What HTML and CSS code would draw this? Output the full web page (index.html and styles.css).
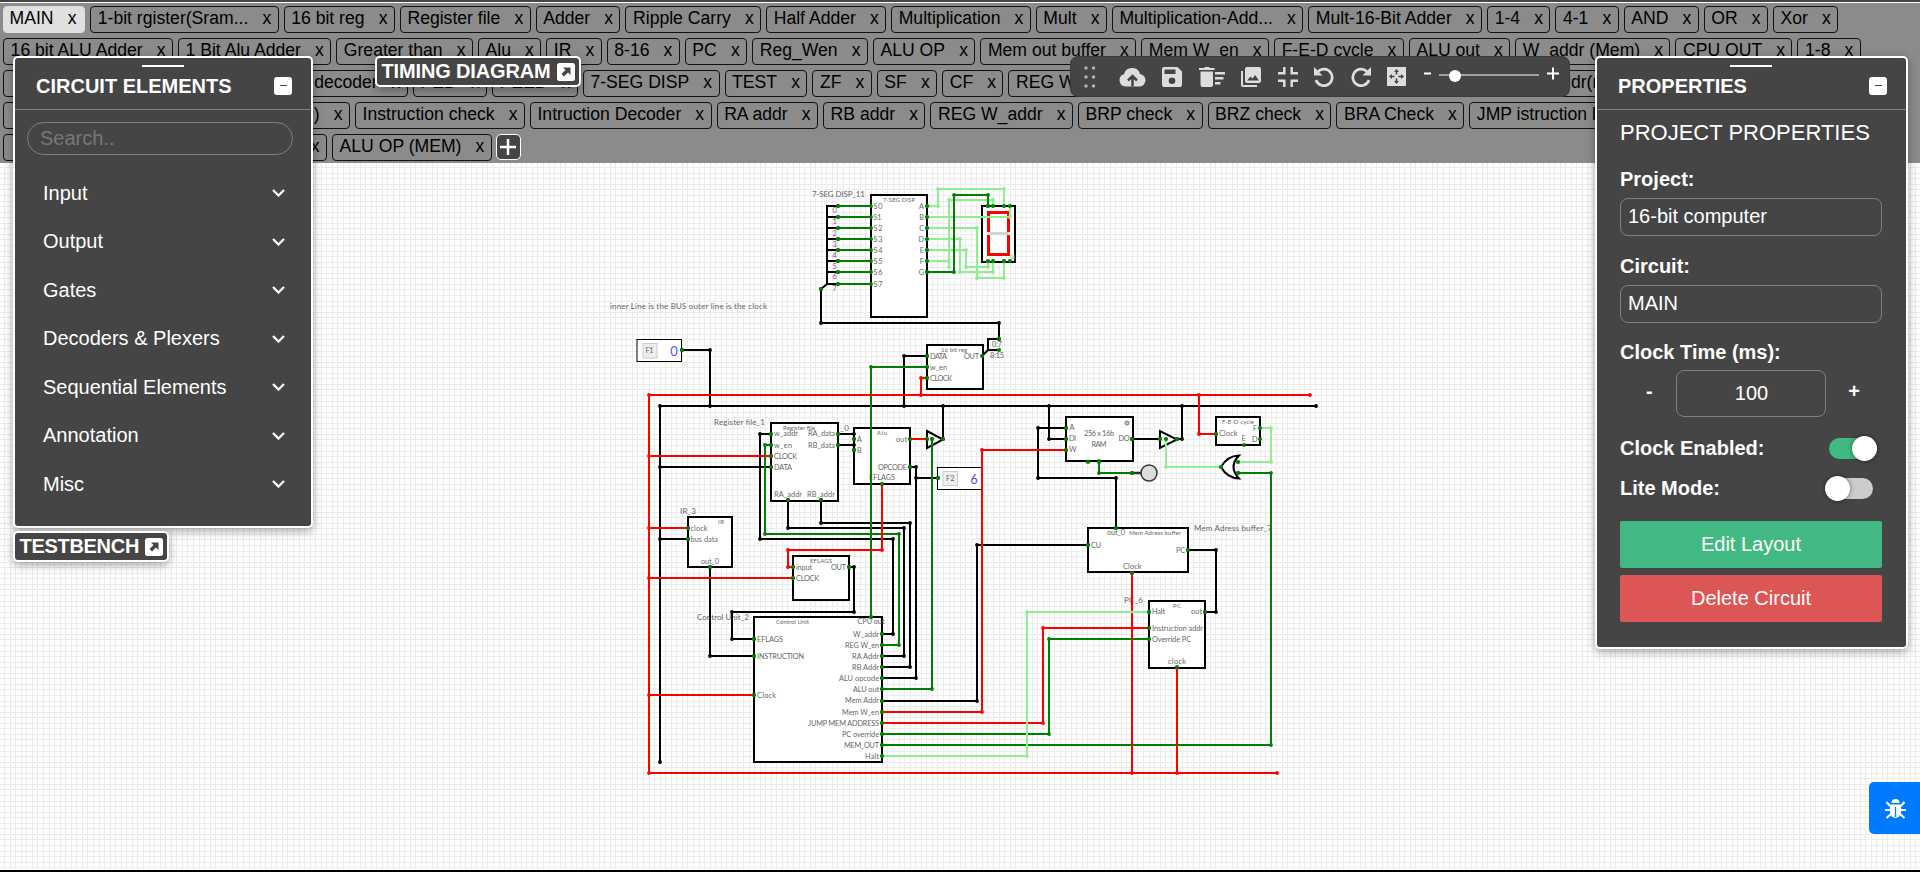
FILE: index.html
```html
<!DOCTYPE html>
<html lang="en">
<head>
<meta charset="utf-8">
<title>16-bit computer</title>
<link rel="stylesheet" href="styles.css">
</head>
<body>
<div class="app">
  <header class="tabs">
    <div class="row">
      <span class="tab active">MAIN<i>x</i></span><span class="tab">1-bit rgister(Sram...<i>x</i></span><span class="tab">16 bit reg<i>x</i></span><span class="tab">Register file<i>x</i></span><span class="tab">Adder<i>x</i></span><span class="tab">Ripple Carry<i>x</i></span><span class="tab">Half Adder<i>x</i></span><span class="tab">Multiplication<i>x</i></span><span class="tab">Mult<i>x</i></span><span class="tab">Multiplication-Add...<i>x</i></span><span class="tab">Mult-16-Bit Adder<i>x</i></span><span class="tab">1-4<i>x</i></span><span class="tab">4-1<i>x</i></span><span class="tab">AND<i>x</i></span><span class="tab">OR<i>x</i></span><span class="tab">Xor<i>x</i></span>
    </div>
    <div class="row">
      <span class="tab">16 bit ALU Adder<i>x</i></span><span class="tab">1 Bit Alu Adder<i>x</i></span><span class="tab">Greater than<i>x</i></span><span class="tab">Alu<i>x</i></span><span class="tab">IR<i>x</i></span><span class="tab">8-16<i>x</i></span><span class="tab">PC<i>x</i></span><span class="tab">Reg_Wen<i>x</i></span><span class="tab">ALU OP<i>x</i></span><span class="tab">Mem out buffer<i>x</i></span><span class="tab">Mem W_en<i>x</i></span><span class="tab">F-E-D cycle<i>x</i></span><span class="tab">ALU out<i>x</i></span><span class="tab">W_addr (Mem)<i>x</i></span><span class="tab">CPU OUT<i>x</i></span><span class="tab">1-8<i>x</i></span>
    </div>
    <div class="row">
      <span class="tab w-a"></span><span class="tab w-b">decoder<i>x</i></span><span class="tab">PED<i>x</i></span><span class="tab">PEED<i>x</i></span><span class="tab">7-SEG DISP<i>x</i></span><span class="tab">TEST<i>x</i></span><span class="tab">ZF<i>x</i></span><span class="tab">SF<i>x</i></span><span class="tab">CF<i>x</i></span><span class="tab w-c">REG W</span><span class="tab">W_addr(reg)<i>x</i></span>
    </div>
    <div class="row">
      <span class="tab w-d"></span><span class="tab w-e">(MEM)<i>x</i></span><span class="tab">Instruction check<i>x</i></span><span class="tab">Intruction Decoder<i>x</i></span><span class="tab">RA addr<i>x</i></span><span class="tab">RB addr<i>x</i></span><span class="tab">REG W_addr<i>x</i></span><span class="tab">BRP check<i>x</i></span><span class="tab">BRZ check<i>x</i></span><span class="tab">BRA Check<i>x</i></span><span class="tab">JMP istruction b...<i>x</i></span>
    </div>
    <div class="row">
      <span class="tab w-f"></span><span class="tab w-g"><i>x</i></span><span class="tab">ALU OP (MEM)<i>x</i></span><button class="add" aria-label="New circuit"><svg width="16" height="16"><path d="M8 0V16M0 8H16"/></svg></button>
    </div>
  </header>

  <main class="stage">
    <svg class="canvas" viewBox="0 163 1920 707" width="1920" height="707">
      <defs>
        <pattern id="grid" x="49" y="45" width="50" height="50" patternUnits="userSpaceOnUse">
          <path class="gridline" d="M0 .5H50M0 6.500H50M0 11.500H50M0 17.500H50M0 22.500H50M0 28.500H50M0 33.500H50M0 39.500H50M0 44.500H50M.5 0V50M5.500 0V50M11.500 0V50M16.500 0V50M22.500 0V50M27.500 0V50M33.500 0V50M38.500 0V50M44.500 0V50"/>
        </pattern>
        <marker id="mk" markerUnits="userSpaceOnUse" markerWidth="4" markerHeight="4" refX="2" refY="2"><circle cx="2" cy="2" r="1.900" fill="#000"/></marker>
        <marker id="mr" markerUnits="userSpaceOnUse" markerWidth="4" markerHeight="4" refX="2" refY="2"><circle cx="2" cy="2" r="1.900" fill="#f00"/></marker>
        <marker id="mg" markerUnits="userSpaceOnUse" markerWidth="4" markerHeight="4" refX="2" refY="2"><circle cx="2" cy="2" r="1.900" fill="#008000"/></marker>
        <marker id="ml" markerUnits="userSpaceOnUse" markerWidth="4" markerHeight="4" refX="2" refY="2"><circle cx="2" cy="2" r="1.900" fill="#90ee90"/></marker>
      </defs>
      <rect x="0" y="163" width="1920" height="707" fill="url(#grid)"/>

      <g class="lbl">
        <text class="n" x="812" y="196.500" textLength="53">7-SEG DISP_11</text>
        <text class="n" x="610" y="309" textLength="157">inner Line is the BUS outer line is the clock</text>
        <text class="n" x="714" y="425" textLength="51">Register file_1</text>
        <text class="n" x="840" y="431" textLength="9">_0</text>
        <text class="n" x="680" y="514" textLength="16">IR_3</text>
        <text class="n" x="697" y="620" textLength="52">Control Unit_2</text>
        <text class="n" x="1194" y="531" textLength="78">Mem Adress buffer_7</text>
        <text class="n" x="1124" y="603" textLength="19">PC_6</text>
      </g>

      <g class="box">
        <rect x="871" y="195" width="56" height="122"/>
        <rect x="982" y="206" width="33" height="56"/>
        <rect x="927" y="345" width="56" height="44"/>
        <rect x="771" y="423" width="67" height="78"/>
        <rect x="854" y="428" width="56" height="56"/>
        <rect x="793" y="556" width="56" height="44"/>
        <rect x="688" y="517" width="44" height="50"/>
        <rect x="754" y="617" width="128" height="145"/>
        <rect x="1066" y="417" width="67" height="44"/>
        <rect x="1216" y="417" width="44" height="28"/>
        <rect x="1088" y="528" width="100" height="44"/>
        <rect x="1149" y="601" width="56" height="67"/>
      </g>
      <g class="inp">
        <rect x="637" y="339.500" width="44.500" height="22"/><rect x="937.500" y="467.500" width="44.500" height="22"/>
      </g>
      <g class="key"><rect x="643" y="343.500" width="14" height="14.500"/><rect x="943" y="471.500" width="14.500" height="14"/></g>

      <g class="lbl">
        <text x="832.500" y="213">0</text><text x="832.500" y="224">1</text><text x="832.500" y="236">2</text><text x="832.500" y="247">3</text><text x="832.500" y="258">4</text><text x="832.500" y="269">5</text><text x="832.500" y="279">6</text><text x="832.500" y="291">7</text>
        <text x="873.500" y="209" textLength="9">S0</text><text x="873.500" y="220" textLength="8">S1</text><text x="873.500" y="231" textLength="9">S2</text><text x="873.500" y="242" textLength="9">S3</text><text x="873.500" y="253" textLength="9">S4</text><text x="873.500" y="264" textLength="9">S5</text><text x="873.500" y="275" textLength="9">S6</text><text x="873.500" y="287" textLength="9">S7</text>
        <g class="e"><text x="924" y="209">A</text><text x="924" y="220">B</text><text x="924" y="231">C</text><text x="924" y="242">D</text><text x="924" y="253">E</text><text x="924" y="264">F</text><text x="924" y="275">G</text></g>
        <text class="t" x="883" y="202" textLength="32">7-SEG DISP</text>
        <text x="645.500" y="353" textLength="8">F1</text><text x="946" y="481" textLength="8.500">F2</text>

        <text class="t" x="941" y="352" textLength="26">16 bit reg</text>
        <text x="930" y="359" textLength="17">DATA</text><text x="930" y="370" textLength="17">w_en</text><text x="930" y="381" textLength="22">CLOCK</text><text x="964" y="359" textLength="15">OUT</text>
        <text x="992" y="347" textLength="10">0:7</text><text x="990" y="358" textLength="14">8:15</text>

        <text class="t" x="783" y="430" textLength="32">Register file</text>
        <text x="774" y="436" textLength="24">w_addr</text><text x="774" y="448" textLength="18">w_en</text><text x="774" y="459" textLength="23">CLOCK</text><text x="774" y="470" textLength="18">DATA</text>
        <text x="808" y="436" textLength="27">RA_data</text><text x="808" y="448" textLength="27">RB_data</text><text x="774" y="497" textLength="28">RA_addr</text><text x="807" y="497" textLength="28">RB_addr</text>

        <text class="t" x="877" y="435" textLength="10">Alu</text>
        <text x="857" y="442">A</text><text x="857" y="453">B</text><text x="896" y="442" textLength="11">out</text><text x="878" y="470" textLength="29">OPCODE</text><text x="869" y="480" textLength="26">EFLAGS</text>

        <text class="t" x="810" y="563" textLength="22">EFLAGS</text>
        <text x="796" y="570" textLength="16">input</text><text x="796" y="581" textLength="23">CLOCK</text><text x="831" y="570" textLength="15">OUT</text>

        <text class="t" x="718" y="524" textLength="6">IR</text>
        <text x="690.500" y="531" textLength="17">clock</text><text x="690.500" y="542" textLength="27.500">bus data</text><text x="701" y="564" textLength="18">out_0</text>

        <text class="t" x="776" y="624" textLength="33">Control Unit</text>
        <text x="857.500" y="624" textLength="27">CPU out</text>
        <text x="757" y="642" textLength="26">EFLAGS</text><text x="757" y="659" textLength="47">INSTRUCTION</text><text x="757" y="698" textLength="19">Clock</text>
        <text x="853" y="637" textLength="26">W_addr</text><text x="845" y="648" textLength="34">REG W_en</text><text x="852" y="659" textLength="27">RA Addr</text><text x="852" y="670" textLength="27">RB Addr</text><text x="839" y="681" textLength="40">ALU opcode</text><text x="853" y="692" textLength="26">ALU out</text><text x="845" y="703" textLength="34">Mem Addr</text><text x="842" y="715" textLength="37">Mem W_en</text><text x="808" y="726" textLength="71">JUMP MEM ADDRESS</text><text x="842" y="737" textLength="37">PC override</text><text x="844" y="748" textLength="35">MEM_OUT</text><text x="865" y="759" textLength="14">Halt</text>

        <text x="1084" y="436" textLength="30">256 x 16b</text><text x="1091.500" y="447" textLength="15">RAM</text>
        <text x="1069.500" y="430">A</text><text x="1069" y="441" textLength="7">DI</text><text x="1069" y="452">W</text><text x="1118.500" y="441" textLength="11">DO</text>

        <text class="t" x="1222" y="424" textLength="32">F-E-D cycle</text>
        <text x="1219" y="436" textLength="18.500">Clock</text><text x="1253" y="431">F</text><text x="1252" y="442">D</text><text x="1241.500" y="441">E</text>

        <text class="t" x="1129" y="535" textLength="52">Mem Adress buffer</text>
        <text x="1107" y="535" textLength="18">out_0</text><text x="1091" y="548" textLength="10">CU</text><text x="1176" y="553" textLength="9">PC</text><text x="1123" y="569" textLength="18.500">Clock</text>

        <text class="t" x="1173" y="608" textLength="8">PC</text>
        <text x="1152" y="614" textLength="13">Halt</text><text x="1191" y="614" textLength="11">out</text><text x="1152" y="631" textLength="51">Instruction addr</text><text x="1152" y="642" textLength="39">Override PC</text><text x="1168" y="664" textLength="18">clock</text>
      </g>
      <g class="val"><text x="674" y="355.500">0</text><text x="974" y="483.500">6</text></g>

      <g class="seg">
        <path d="M987 212.500H1010M987 254.500H1010M988.500 214V232M1008.500 214V232M988.500 235V253M1008.500 235V253"/>
        <path class="off" d="M990 233.500H1008"/><rect x="1010.500" y="255" width="4" height="4" fill="#d3d3d3" stroke="none"/>
      </g>

      <g class="gate">
        <path class="thin" d="M838 206H827V284M827 217H838M827 228H838M827 239H838M827 250H838M827 261H838M827 272H838M821 289L827 284H838"/>
        <path class="thin" d="M999 339H988V350H999M988 350L982 356"/>
        <path d="M927 431V448L943 439.500Z"/>
        <path d="M1160 431V448L1177 439.500Z"/>
        <path d="M1239 455.500Q1227 456 1221 467Q1227 478 1239 478.500Q1228 467 1239 455.500Z"/>
      </g>
      <path d="M1132 473H1142" stroke="#333" stroke-width="2.500"/>
      <circle cx="1149" cy="473" r="8" fill="#ddd" stroke="#333" stroke-width="1.500"/>
      <circle cx="1127" cy="423" r="2" fill="#90ee90" stroke="#777"/>

      <g class="wire k">
        <path d="M821 289V323H999V339"/>
        <path d="M682 350H710V406"/>
        <path d="M927 356H904V406"/>
        <path d="M660 762V406H1316"/>
        <path d="M660 467H771"/><path d="M660 539H688"/>
        <path d="M838 434H854V439"/><path d="M838 445H854V450"/>
        <path d="M943 439V406"/>
        <path d="M910 467H916V678H882"/><path d="M916 478H938"/>
        <path d="M849 567H854V612H732V639H754"/>
        <path d="M710 567V656H754"/>
        <path d="M788 500V528H904V656H882"/>
        <path d="M821 500V523H910V667H882"/>
        <path d="M771 434H760V539H893V634H882"/>
        <path d="M1066 428H1038V478H1116V528"/>
        <path d="M1066 439H1049V406"/>
        <path d="M1132 439H1160"/><path d="M1177 439H1182V406"/>
        <path d="M1088 545H977V701H882"/>
        <path d="M1188 550H1216V612H1205"/>
      </g>
      <g class="wire g">
        <path d="M838 206H871"/><path d="M838 217H871"/><path d="M838 228H871"/><path d="M838 239H871"/><path d="M838 250H871"/><path d="M838 261H871"/><path d="M838 272H871"/><path d="M838 284H871"/>
        <path d="M927 367H871V617"/>
        <path d="M932 439V689H882"/>
        <path d="M771 445H765V534H899V645H882"/>
        <path d="M1099 461V473H1132"/>
        <path d="M882 734H1049V639H1149"/>
        <path d="M882 745H1271V473H1238"/>
      </g>
      <g class="wire r">
        <path d="M927 378H921V395"/>
        <path d="M1310 395H649V773H1277"/>
        <path d="M649 456H771"/><path d="M649 528H688"/><path d="M649 578H793"/><path d="M649 695H754"/>
        <path d="M910 439H927"/>
        <path d="M882 484V550H788V567H793"/>
        <path d="M1066 450H982V712H882"/>
        <path d="M1199 395V434H1216"/>
        <path d="M1132 573V773"/><path d="M1177 668V773"/>
        <path d="M1149 628H1043V723H882"/>
      </g>
      <g class="wire l">
        <path d="M927 206H938V189H1004V206"/>
        <path d="M927 217H1010V206"/>
        <path d="M927 228H977V278H1004V261"/>
        <path d="M927 239H960V272H993V261"/>
        <path d="M927 250H966V267H988V261"/>
        <path d="M927 261H949"/><path d="M949 267V200H993V206"/>
        <path d="M1166 439V467H1221"/>
        <path d="M1260 428H1271V462H1238"/>
        <path d="M1149 612H1027V756H882"/>
      </g>
      <g class="wire g"><path d="M927 272H954V195H988V206"/></g>

      <!-- connection points of the components -->
      <path class="pins" d="M821 289h0M838 206h0M838 217h0M838 228h0M838 239h0M838 250h0M838 261h0M838 272h0M838 284h0M927 206h0M927 217h0M927 228h0M927 239h0M927 250h0M927 261h0M927 272h0M988 206h0M993 206h0M1004 206h0M1010 206h0M988 261h0M993 261h0M1004 261h0M1010 261h0M999 339h0M999 350h0M982 356h0M682 350h0M927 356h0M927 367h0M927 378h0M771 434h0M771 445h0M771 456h0M771 467h0M838 434h0M838 445h0M788 500h0M821 500h0M854 439h0M854 450h0M910 439h0M910 467h0M882 484h0M927 439h0M932 439h0M943 439h0M938 478h0M688 528h0M688 539h0M710 567h0M793 567h0M793 578h0M849 567h0M871 617h0M754 639h0M754 656h0M754 695h0M882 634h0M882 645h0M882 656h0M882 667h0M882 678h0M882 689h0M882 701h0M882 712h0M882 723h0M882 734h0M882 745h0M882 756h0M1066 428h0M1066 439h0M1066 450h0M1132 439h0M1088 462h0M1099 462h0M1132 473h0M1160 439h0M1166 439h0M1177 439h0M1216 434h0M1260 428h0M1260 439h0M1244 445h0M1221 467h0M1238 462h0M1238 473h0M1088 545h0M1116 528h0M1188 550h0M1132 573h0M1149 612h0M1149 628h0M1149 639h0M1205 612h0M1177 667h0"/>
    </svg>
  </main>

  <section class="panel elements">
    <div class="grip"></div>
    <h2>CIRCUIT ELEMENTS<span class="min"></span></h2>
    <div class="search">Search..</div>
    <ul>
      <li>Input<svg width="13" height="8"><path d="M1 1L6.500 6.500L12 1"/></svg></li>
      <li>Output<svg width="13" height="8"><path d="M1 1L6.500 6.500L12 1"/></svg></li>
      <li>Gates<svg width="13" height="8"><path d="M1 1L6.500 6.500L12 1"/></svg></li>
      <li>Decoders &amp; Plexers<svg width="13" height="8"><path d="M1 1L6.500 6.500L12 1"/></svg></li>
      <li>Sequential Elements<svg width="13" height="8"><path d="M1 1L6.500 6.500L12 1"/></svg></li>
      <li>Annotation<svg width="13" height="8"><path d="M1 1L6.500 6.500L12 1"/></svg></li>
      <li>Misc<svg width="13" height="8"><path d="M1 1L6.500 6.500L12 1"/></svg></li>
    </ul>
  </section>

  <div class="chip testbench">TESTBENCH<svg width="18" height="18" viewBox="0 0 18 18"><rect width="18" height="18" rx="2.500"/><path d="M6 4.500H13.500V12L11 9.500L7 13.500L4.500 11L8.500 7Z"/></svg></div>
  <div class="chip timing">TIMING DIAGRAM<svg width="18" height="18" viewBox="0 0 18 18"><rect width="18" height="18" rx="2.500"/><path d="M6 4.500H13.500V12L11 9.500L7 13.500L4.500 11L8.500 7Z"/></svg></div>

  <div class="toolbar">
    <svg class="dots" width="12" height="22"><g fill="#b5b5b5"><circle cx="2" cy="2" r="1.700"/><circle cx="9.500" cy="2" r="1.700"/><circle cx="2" cy="11" r="1.700"/><circle cx="9.500" cy="11" r="1.700"/><circle cx="2" cy="20" r="1.700"/><circle cx="9.500" cy="20" r="1.700"/></g></svg>
    <svg class="cloud" width="27" height="20" viewBox="0 0 27 20"><path d="M6.500 19.500A6.300 6.300 0 0 1 5 7.200A8.300 8.300 0 0 1 21 7A6.300 6.300 0 0 1 21 19.500Z"/><path class="cut" d="M13.500 19.500V10M9 13.500L13.500 9L18 13.500"/></svg>
    <svg width="20" height="20" viewBox="0 0 20 20"><path fill-rule="evenodd" d="M2 0H15.500L20 4.500V18Q20 20 18 20H2Q0 20 0 18V2Q0 0 2 0ZM2.500 2.500V7H13.500V2.500ZM10 10.500A3.300 3.300 0 1 0 10 17.100A3.300 3.300 0 1 0 10 10.500Z"/></svg>
    <svg width="26" height="20" viewBox="0 0 26 20"><path d="M0 1H5L6 0H10L11 1H15.500V3H0ZM1.500 4.500H14V18Q14 20 12 20H3.500Q1.500 20 1.500 18ZM16 5H26V7.500H16ZM16 10H24.500V12.500H16ZM16 15H21.500V17.500H16Z"/></svg>
    <svg width="20" height="20" viewBox="0 0 20 20"><path fill-rule="evenodd" d="M6 0H18Q20 0 20 2V14Q20 16 18 16H6Q4 16 4 14V2Q4 0 6 0ZM6 13.500H18L14 8L11.500 11.500L9.500 9.500ZM0 4H2V18H16V20H2Q0 20 0 18Z"/></svg>
    <svg width="20" height="20" viewBox="0 0 20 20"><path class="ln cmp" d="M6.300 0V6.300H0M13.700 0V6.300H20M6.300 20V13.700H0M13.700 20V13.700H20"/></svg>
    <svg width="20" height="20" viewBox="0 0 20 20"><path class="ln th" d="M4 4.500A8.300 8.300 0 1 1 2 13"/><path d="M0 0V8.500H8.500Z"/></svg>
    <svg width="20" height="20" viewBox="0 0 20 20"><path class="ln th" d="M16 4.500A8.300 8.300 0 1 0 18 13"/><path d="M20 0V8.500H11.500Z"/></svg>
    <svg width="19" height="19" viewBox="0 0 19 19"><path fill-rule="evenodd" d="M0 0H19V19H0ZM9.500 2L7 5H8.700V7.500H10.300V5H12ZM9.500 17L12 14H10.300V11.500H8.700V14H7ZM2 9.500L5 12V10.300H7.500V8.700H5V7ZM17 9.500L14 7V8.700H11.500V10.300H14V12Z"/></svg>
    <svg class="zoom" width="136" height="20" viewBox="0 0 136 20"><path d="M0 6.500H7" stroke-width="2"/><path d="M15 8H115" stroke-width="1.200"/><circle cx="31" cy="9" r="6"/><path d="M123 6.500H135M129 .5V12.500" stroke-width="2"/></svg>
  </div>

  <section class="panel props">
    <div class="grip"></div>
    <h2>PROPERTIES<span class="min"></span></h2>
    <div class="body">
      <h3>PROJECT PROPERTIES</h3>
      <label>Project:</label>
      <div class="field">16-bit computer</div>
      <label>Circuit:</label>
      <div class="field">MAIN</div>
      <label>Clock Time (ms):</label>
      <div class="stepper"><b>-</b><div class="field num">100</div><b>+</b></div>
      <div class="line"><label>Clock Enabled:</label><span class="toggle on"></span></div>
      <div class="line second"><label>Lite Mode:</label><span class="toggle"></span></div>
      <button class="btn green">Edit Layout</button>
      <button class="btn red">Delete Circuit</button>
    </div>
  </section>

  <button class="bug" aria-label="Report issue"><svg width="21" height="21" viewBox="0 0 21 21"><path d="M6.500 5A4 4 0 0 1 14.500 5Z"/><path d="M5 6.500H16V14A5.500 6 0 0 1 5 14Z"/><path class="leg" d="M1.500 4L5 8M19.500 4L16 8M0 12H6M21 12H15M1.500 20L6 16M19.500 20L15 16"/><path d="M10.500 9V19" stroke="#007bff" stroke-width="1.200"/></svg></button>
</div>
</body>
</html>
```
FILE: styles.css
```css
* { box-sizing: border-box; }
body { margin: 0; background: #fff; font-family: "Liberation Sans", Arial, sans-serif; overflow: hidden; }
.app { position: relative; width: 1920px; height: 872px; overflow: hidden; }

/* circuit tabs */
.tabs { height: 163px; background: #8b8b8b; border-top: 2px solid #454545; box-shadow: inset 0 1px #fff; padding: 4px 0 0 3px; overflow: hidden; }
.row { display: flex; gap: 5px; height: 27px; margin-bottom: 5px; white-space: nowrap; }
.tab { flex: none; display: flex; border: 1px solid #111; border-radius: 4px; padding: 0 6.400px 0 6.600px; height: 27px; font-size: 17.600px; line-height: 23px; color: #000; }
.tab i { font-style: normal; margin-left: 14.100px; }
.tab.active { background: #e0e0e0; border-color: #e0e0e0; padding: 0 7.700px 0 5.600px; }
.w-a { width: 180px; }
.w-b { width: 220px; }
.w-c { width: 504px; }
.w-d { width: 160px; }
.w-e { width: 182px; }
.w-f { width: 150px; }
.w-g { width: 169px; }
.w-b, .w-e, .w-g { justify-content: flex-end; }
.add { width: 25px; height: 26px; margin-left: -1px; padding: 0; background: #454545; border: 1px solid #fff; border-radius: 5px; display: flex; align-items: center; justify-content: center; }
.add path { stroke: #fff; stroke-width: 2.500; }

/* drawing area */
.stage { height: 709px; border-bottom: 2px solid #000; }
.canvas { display: block; }
.gridline { stroke: #ececec; stroke-width: 1; fill: none; }
.box rect { fill: #fff; stroke: #000; stroke-width: 2; }
.inp rect { fill: #fff; stroke: #000; stroke-width: 1; }
.key rect { fill: #eee; stroke: #ccc; stroke-width: 1; }
.lbl text { font-family: Lato, sans-serif; font-size: 7.300px; fill: #666; }
.lbl .n { font-size: 8px; }
.lbl .t { font-size: 6px; }
.e text { text-anchor: end; }
.val text { font: 13px Lato, sans-serif; fill: #5050ff; text-anchor: middle; }
.seg path { stroke: #f00; stroke-width: 3; fill: none; }
.seg .off { stroke: #d3d3d3; }
.gate path { fill: #fff; stroke: #000; stroke-width: 2; }
.gate .thin { fill: none; }
.wire path { fill: none; stroke-width: 2; }
.k path { stroke: #000; marker: url(#mk); }
.g path { stroke: #008000; marker: url(#mg); }
.r path { stroke: #f00; marker: url(#mr); }
.l path { stroke: #90ee90; marker: url(#ml); }
.pins { stroke: #008000; stroke-width: 4.200; stroke-linecap: round; fill: none; }

/* floating panels */
.panel, .chip { position: absolute; background: #454545; border: 2px solid #fff; border-radius: 5px; color: #fff; box-shadow: 0 3px 10px rgba(0,0,0,.35); }
.panel { top: 56px; font-size: 20px; }
.elements { left: 13px; width: 300px; height: 472px; }
.props { left: 1595px; width: 313px; height: 593px; }
.grip { width: 42px; height: 2px; margin: 7px auto 0; background: #fff; }
.elements .grip { margin-left: 127px; }
.props .grip { margin-left: 133px; }
.panel h2 { display: flex; justify-content: space-between; align-items: center; margin: 0; height: 43px; padding: 0 19px 5px 21px; font-size: 20px; line-height: 24px; border-bottom: 1px solid #808080; }
.min { width: 18px; height: 18px; background: #fff; border-radius: 3px; display: flex; align-items: center; justify-content: center; }
.min::after { content: ""; width: 7px; height: 1px; background: #454545; }
.search { margin: 12px 18px 0 12px; height: 33px; border: 1px solid #808080; border-radius: 17px; padding-left: 12px; line-height: 31px; color: #777; }
.panel ul { list-style: none; margin: 14px 0 0; padding: 0 26px 0 28px; }
.panel li { display: flex; justify-content: space-between; align-items: center; height: 48.500px; }
.panel li path { fill: none; stroke: #fff; stroke-width: 2.300; }

.chip { display: flex; align-items: center; justify-content: space-between; height: 31px; padding: 0 4px 0 4.500px; font-size: 20px; font-weight: bold; }
.chip rect { fill: #fff; }
.chip path { fill: #454545; }
.testbench { left: 13px; top: 531px; width: 156px; letter-spacing: -.3px; }
.timing { left: 375px; top: 56px; width: 206px; letter-spacing: -.15px; }

/* quick tools */
.toolbar { position: absolute; left: 1070px; top: 56px; width: 500px; height: 41px; display: flex; align-items: flex-start; background: #454545; border: 1px solid #3a3a3a; border-radius: 8px; padding: 9.500px 0 0 13px; gap: 16.500px; }
.toolbar svg { fill: #ddd; flex: none; }
.toolbar .dots { margin: -1px 6px 0 0; }
.toolbar .cut { fill: none; stroke: #454545; stroke-width: 2.500; }
.toolbar .ln { fill: none; stroke: #ddd; stroke-width: 3; }
.toolbar .cmp { stroke-width: 2.500; }
.toolbar .th { stroke-width: 2.700; }
.toolbar .zoom { fill: #fff; stroke: #fff; margin-left: 1px; }
.toolbar .zoom circle { stroke: none; }

/* properties */
.body { padding: 0 24px 0 23px; }
.body h3 { margin: 9.500px 0 0; font-size: 22px; line-height: 26px; font-weight: normal; white-space: nowrap; }
.body label { display: block; font-weight: bold; line-height: 24px; margin-top: 21.500px; }
.field { height: 38px; margin-top: 7px; border: 1px solid #808080; border-radius: 8px; padding-left: 7px; line-height: 34px; }
.field + label { margin-top: 17.500px; }
.stepper { display: flex; justify-content: space-between; align-items: center; padding: 0 22px 0 26px; margin-top: 6px; }
.stepper b { line-height: 24px; margin-bottom: 6px; }
.field.num { width: 150px; height: 47px; margin: 0 0 0 2px; padding: 0; line-height: 44px; text-align: center; }
.line { display: flex; justify-content: space-between; align-items: center; height: 40px; margin-top: 11px; padding-right: 6px; }
.line label { margin: 0; }
.second { margin-top: 0; padding-right: 9px; }
.toggle { position: relative; width: 47px; height: 21px; border-radius: 11px; background: #ccc; }
.toggle::after { content: ""; position: absolute; left: -1px; top: -2px; width: 25px; height: 25px; border-radius: 50%; background: #fff; box-shadow: 0 0 5px rgba(0,0,0,.5); }
.toggle.on { background: #42b983; }
.toggle.on::after { left: 23px; }
.btn { display: block; width: 262px; height: 47px; border: 0; border-radius: 2px; color: #fff; font: 20px "Liberation Sans", Arial, sans-serif; }
.green { background: #42b983; margin-top: 13px; }
.red { background: #dc5656; margin-top: 7px; }

.bug { position: absolute; left: 1869px; top: 782px; width: 51px; height: 52px; border: 0; border-radius: 5px 0 0 5px; background: #007bff; padding: 1px 0 0 2px; display: flex; align-items: center; justify-content: center; }
.bug svg { fill: #fff; }
.bug .leg { stroke: #fff; stroke-width: 2; fill: none; }
```
